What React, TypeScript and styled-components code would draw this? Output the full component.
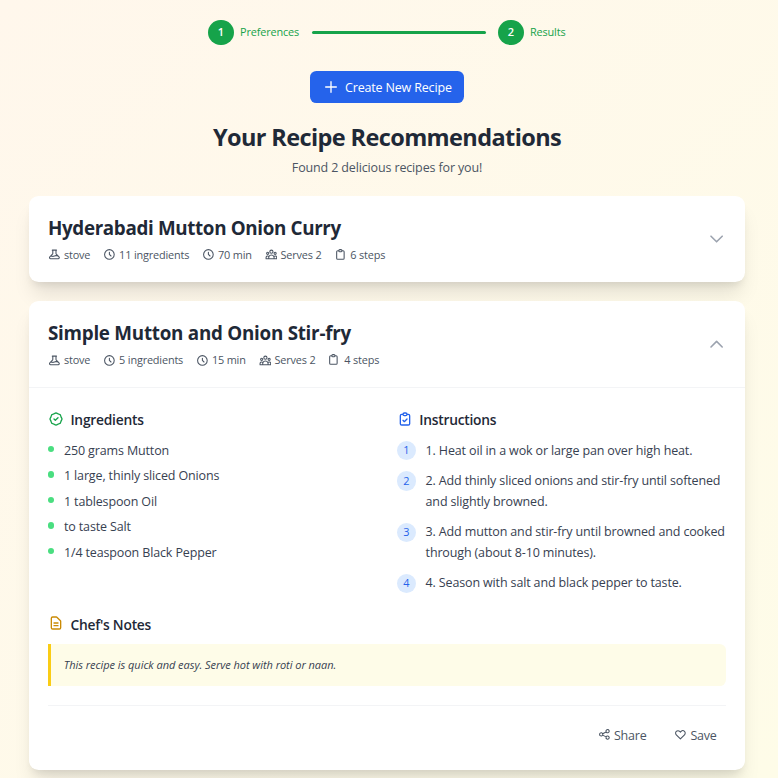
import React from "react";
import styled, { createGlobalStyle } from "styled-components";

const GlobalStyle = createGlobalStyle`
  *, *::before, *::after { box-sizing: border-box; }
  html, body { margin: 0; height: 778px; overflow: hidden; }
  h1, h2, h3, p, ul, ol { margin: 0; padding: 0; list-style: none; font-weight: inherit; }
  button { font: inherit; letter-spacing: inherit; color: inherit; border: 0; background: none; padding: 0; cursor: pointer; }
`;

const ICONS = {
  beaker:
    "M8 4h8l-1 1v5.172a2 2 0 00.586 1.414l5 5c1.26 1.26.367 3.414-1.415 3.414H4.828c-1.782 0-2.674-2.154-1.414-3.414l5-5A2 2 0 009 10.172V5L8 4zM19.428 15.428a2 2 0 00-1.022-.547l-2.387-.477a6 6 0 00-3.86.517l-.318.158a6 6 0 01-3.86.517L6.05 15.21a2 2 0 00-1.806.547",
  clock: "M12 8v4l3 3m6-3a9 9 0 11-18 0 9 9 0 0118 0z",
  people:
    "M17 20h5v-2a3 3 0 00-5.356-1.857M17 20H7m10 0v-2c0-.656-.126-1.283-.356-1.857M7 20H2v-2a3 3 0 015.356-1.857M7 20v-2c0-.656.126-1.283.356-1.857m0 0a5.002 5.002 0 019.288 0M15 7a3 3 0 11-6 0 3 3 0 016 0zm6 3a2 2 0 11-4 0 2 2 0 014 0zM7 10a2 2 0 11-4 0 2 2 0 014 0z",
  clipboard:
    "M9 5H7a2 2 0 00-2 2v12a2 2 0 002 2h10a2 2 0 002-2V7a2 2 0 00-2-2h-2M9 5a2 2 0 002 2h2a2 2 0 002-2M9 5a2 2 0 012-2h2a2 2 0 012 2",
  clipboardCheck:
    "M9 5H7a2 2 0 00-2 2v12a2 2 0 002 2h10a2 2 0 002-2V7a2 2 0 00-2-2h-2M9 5a2 2 0 002 2h2a2 2 0 002-2M9 5a2 2 0 012-2h2a2 2 0 012 2m-6 9l2 2 4-4",
  badge:
    "M9 12l2 2 4-4M7.835 4.697a3.42 3.42 0 001.946-.806 3.42 3.42 0 014.438 0 3.42 3.42 0 001.946.806 3.42 3.42 0 013.138 3.138 3.42 3.42 0 00.806 1.946 3.42 3.42 0 010 4.438 3.42 3.42 0 00-.806 1.946 3.42 3.42 0 01-3.138 3.138 3.42 3.42 0 00-1.946.806 3.42 3.42 0 01-4.438 0 3.42 3.42 0 00-1.946-.806 3.42 3.42 0 01-3.138-3.138 3.42 3.42 0 00-.806-1.946 3.42 3.42 0 010-4.438 3.42 3.42 0 00.806-1.946 3.42 3.42 0 013.138-3.138z",
  document:
    "M9 12h6m-6 4h6m2 5H7a2 2 0 01-2-2V5a2 2 0 012-2h5.586a1 1 0 01.707.293l5.414 5.414a1 1 0 01.293.707V19a2 2 0 01-2 2z",
  share:
    "M8.684 13.342C8.886 12.938 9 12.482 9 12c0-.482-.114-.938-.316-1.342m0 2.684a3 3 0 110-2.684m0 2.684l6.632 3.316m-6.632-6l6.632-3.316m0 0a3 3 0 105.367-2.684 3 3 0 00-5.367 2.684zm0 9.316a3 3 0 105.368 2.684 3 3 0 00-5.368-2.684z",
  heart:
    "M4.318 6.318a4.5 4.5 0 000 6.364L12 20.364l7.682-7.682a4.5 4.5 0 00-6.364-6.364L12 7.636l-1.318-1.318a4.5 4.5 0 00-6.364 0z",
  plus: "M12 4v16m8-8H4",
  down: "M19 9l-7 7-7-7",
  up: "M5 15l7-7 7 7",
};

type IconName = keyof typeof ICONS;

const Svg = styled.svg<{ $size: number; $color?: string }>`
  flex: none;
  display: block;
  width: ${(p) => p.$size}px;
  height: ${(p) => p.$size}px;
  color: ${(p) => p.$color ?? "inherit"};
  fill: none;
  stroke: currentColor;
  stroke-width: 2;
  stroke-linecap: round;
  stroke-linejoin: round;
`;

const Icon = ({ name, size = 12.8, color }: { name: IconName; size?: number; color?: string }) => (
  <Svg viewBox="0 0 24 24" $size={size} $color={color} aria-hidden>
    <path d={ICONS[name]} />
  </Svg>
);

const Page = styled.main`
  height: 778px;
  overflow: hidden;
  padding: 19.6px 32.8px 0 28.8px;
  background: linear-gradient(to bottom right, #fff7ec, #fefce8);
  font-family: "Open Sans", "Noto Sans", sans-serif;
  font-size: 12.5px;
  line-height: 19.2px;
  letter-spacing: -0.14px;
  color: #374151;
`;

const Stepper = styled.nav`
  display: flex;
  align-items: center;
  justify-content: center;
  margin-bottom: 25.6px;
`;

const StepDot = styled.span`
  display: flex;
  align-items: center;
  justify-content: center;
  width: 25.6px;
  height: 25.6px;
  padding-bottom: 1px;
  border-radius: 50%;
  background: #16a34a;
  color: #fff;
  font-size: 11px;
  font-weight: 600;
`;

const StepLabel = styled.span<{ $width: number }>`
  width: ${(p) => p.$width}px;
  margin-left: 6.5px;
  color: #16a34a;
  font-size: 10.9px;
  font-weight: 500;
  letter-spacing: -0.16px;
  line-height: 16px;
  white-space: nowrap;
`;

const StepLine = styled.span`
  width: 174px;
  height: 3.2px;
  margin: 0 12.2px 0 12.7px;
  border-radius: 2px;
  background: #16a34a;
`;

const CreateButton = styled.button`
  display: flex;
  align-items: center;
  gap: 6.4px;
  height: 32px;
  margin: 0 auto 19.2px;
  padding: 0 12.4px 0 12.8px;
  border-radius: 6.4px;
  background: #2563eb;
  color: #fff;
  font-size: 12.5px;
  letter-spacing: -0.17px;
`;

const ButtonText = styled.span`
  padding-top: 1.6px;
`;

const Intro = styled.header`
  padding-top: 0.9px;
  margin-bottom: 18.5px;
  text-align: center;
`;

const PageTitle = styled.h1`
  margin-bottom: 6.4px;
  color: #1f2937;
  font-size: 23.5px;
  font-weight: 700;
  letter-spacing: -0.61px;
  line-height: 28.8px;
`;

const Subtitle = styled.p`
  color: #4b5563;
`;

const CardList = styled.div`
  display: grid;
  gap: 19.2px;
`;

const Card = styled.article`
  border-radius: 9.6px;
  background: #fff;
  box-shadow: 0 16px 20px -4px rgba(0, 0, 0, 0.1), 0 6.4px 8px -4.8px rgba(0, 0, 0, 0.1);
`;

const CardHeader = styled.header`
  display: flex;
  align-items: center;
  justify-content: space-between;
  height: 86.2px;
  padding: 19.1px 18.8px 19.1px 19.2px;
`;

const RecipeTitle = styled.h2<{ $track: number }>`
  padding-top: 1.2px;
  margin-bottom: 5.2px;
  color: #1f2937;
  font-size: 18.8px;
  font-weight: 700;
  letter-spacing: ${(p) => p.$track}px;
  line-height: 25.6px;
`;

const MetaRow = styled.div`
  display: flex;
  gap: 12.8px;
  color: #4b5563;
  font-size: 10.9px;
  letter-spacing: -0.17px;
  line-height: 16px;
`;

const MetaItem = styled.span`
  display: flex;
  align-items: center;
  gap: 3.2px;
  white-space: nowrap;

  &:last-child svg {
    margin: 0 0.8px 1px -0.8px;
  }
`;

const CardBody = styled.div`
  padding: 19.2px 18.8px 18.6px 19.2px;
  border-top: 1px solid #f3f4f6;
`;

const Columns = styled.div`
  display: grid;
  grid-template-columns: 1fr 1fr;
  gap: 19.2px;
  margin-bottom: 19.2px;
`;

const SectionTitle = styled.h3`
  display: flex;
  align-items: center;
  gap: 6.4px;
  padding-top: 1.5px;
  margin-bottom: 8.1px;
  color: #1f2937;
  font-size: 13.8px;
  font-weight: 600;
  letter-spacing: -0.23px;
  line-height: 22.4px;

  svg {
    margin-bottom: 3.2px;
  }
`;

const IngredientList = styled.ul`
  display: grid;
  gap: 6.4px;
`;

const Ingredient = styled.li`
  display: flex;
  align-items: flex-start;
  gap: 9.6px;

  &::before {
    content: "";
    width: 6.4px;
    height: 6.4px;
    margin-top: 6.2px;
    border-radius: 50%;
    background: #4ade80;
  }
`;

const IngredientText = styled.span`
  padding-top: 1.2px;
  margin-bottom: -1.2px;
`;

const StepList = styled.ol`
  display: grid;
  gap: 9.6px;
`;

const Step = styled.li`
  display: flex;
  align-items: flex-start;
  gap: 9.6px;
  line-height: 20.8px;
`;

const StepText = styled.span`
  padding-top: 1.1px;
  margin-bottom: -1.1px;
`;

const StepNumber = styled.span`
  flex: none;
  display: flex;
  align-items: center;
  justify-content: center;
  width: 19.2px;
  height: 19.2px;
  margin-top: 1.6px;
  border-radius: 50%;
  background: #dbeafe;
  color: #2563eb;
  font-size: 10.9px;
  font-weight: 500;
`;

const Notes = styled.p`
  margin-bottom: 19.2px;
  padding: 12.8px;
  border-left: 3px solid #facc15;
  border-radius: 0 6.4px 6.4px 0;
  background: #fefce8;
  font-size: 11px;
  font-style: italic;
  letter-spacing: -0.04px;
  line-height: 16px;
`;

const Actions = styled.footer`
  display: flex;
  justify-content: flex-end;
  gap: 9px;
  padding-top: 13.2px;
  border-top: 1px solid #f3f4f6;
`;

const ActionButton = styled.button`
  display: flex;
  align-items: center;
  gap: 3.2px;
  height: 32px;
  padding: 0 9.8px 0 9.2px;
  color: #4b5563;
  letter-spacing: -0.22px;

  svg {
    margin-bottom: 1px;
  }
`;

const ActionText = styled.span`
  padding-top: 0.8px;
`;

interface Recipe {
  title: string;
  track: number;
  ingredients: number;
  minutes: number;
  steps: number;
}

const RecipeHeader = ({ recipe, open }: { recipe: Recipe; open?: boolean }) => (
  <CardHeader>
    <div>
      <RecipeTitle $track={recipe.track}>{recipe.title}</RecipeTitle>
      <MetaRow>
        <MetaItem><Icon name="beaker" />stove</MetaItem>
        <MetaItem><Icon name="clock" />{recipe.ingredients} ingredients</MetaItem>
        <MetaItem><Icon name="clock" />{recipe.minutes} min</MetaItem>
        <MetaItem><Icon name="people" />Serves 2</MetaItem>
        <MetaItem><Icon name="clipboard" />{recipe.steps} steps</MetaItem>
      </MetaRow>
    </div>
    <Icon name={open ? "up" : "down"} size={19.2} color="#9ca3af" />
  </CardHeader>
);

const curry: Recipe = { title: "Hyderabadi Mutton Onion Curry", track: -0.34, ingredients: 11, minutes: 70, steps: 6 };
const stirFry: Recipe = { title: "Simple Mutton and Onion Stir-fry", track: -0.25, ingredients: 5, minutes: 15, steps: 4 };

const ingredients = [
  "250 grams Mutton",
  "1 large, thinly sliced Onions",
  "1 tablespoon Oil",
  "to taste Salt",
  "1/4 teaspoon Black Pepper",
];

const steps = [
  "1. Heat oil in a wok or large pan over high heat.",
  "2. Add thinly sliced onions and stir-fry until softened and slightly browned.",
  "3. Add mutton and stir-fry until browned and cooked through (about 8-10 minutes).",
  "4. Season with salt and black pepper to taste.",
];

export default function App() {
  return (
    <>
      <GlobalStyle />
      <Page>
        <Stepper>
          <StepDot>1</StepDot>
          <StepLabel $width={59}>Preferences</StepLabel>
          <StepLine />
          <StepDot>2</StepDot>
          <StepLabel $width={36}>Results</StepLabel>
        </Stepper>
        <CreateButton><Icon name="plus" size={16} /><ButtonText>Create New Recipe</ButtonText></CreateButton>
        <Intro>
          <PageTitle>Your Recipe Recommendations</PageTitle>
          <Subtitle>Found 2 delicious recipes for you!</Subtitle>
        </Intro>
        <CardList>
          <Card><RecipeHeader recipe={curry} /></Card>
          <Card>
            <RecipeHeader recipe={stirFry} open />
            <CardBody>
              <Columns>
                <section>
                  <SectionTitle><Icon name="badge" size={16} color="#16a34a" />Ingredients</SectionTitle>
                  <IngredientList>
                    {ingredients.map((item) => (
                      <Ingredient key={item}><IngredientText>{item}</IngredientText></Ingredient>
                    ))}
                  </IngredientList>
                </section>
                <section>
                  <SectionTitle><Icon name="clipboardCheck" size={16} color="#2563eb" />Instructions</SectionTitle>
                  <StepList>
                    {steps.map((text, i) => (
                      <Step key={text}><StepNumber>{i + 1}</StepNumber><StepText>{text}</StepText></Step>
                    ))}
                  </StepList>
                </section>
              </Columns>
              <SectionTitle><Icon name="document" size={16} color="#ca8a04" />Chef's Notes</SectionTitle>
              <Notes>This recipe is quick and easy. Serve hot with roti or naan.</Notes>
              <Actions>
                <ActionButton><Icon name="share" /><ActionText>Share</ActionText></ActionButton>
                <ActionButton><Icon name="heart" /><ActionText>Save</ActionText></ActionButton>
              </Actions>
            </CardBody>
          </Card>
        </CardList>
      </Page>
    </>
  );
}
